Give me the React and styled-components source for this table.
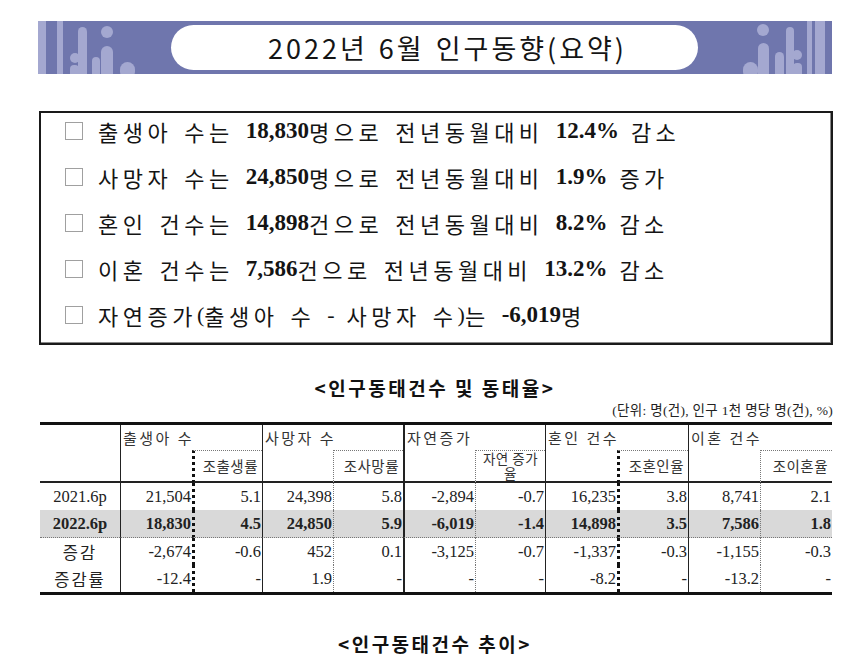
import React from "react";
import styled, { createGlobalStyle } from "styled-components";

const GlobalStyle = createGlobalStyle`
  body {
    margin: 0;
    background: #fff;
    color: #111;
    font-family: "Noto Sans CJK KR", sans-serif;
  }
`;

const Page = styled.div`
  width: 850px;
  box-sizing: border-box;
  padding: 21px 0 30px 38px;
`;

const Banner = styled.div`
  width: 794px;
  height: 53px;
  background: #6f76ad;
  display: flex;
  align-items: center;
`;

const Deco = styled.svg`
  flex: none;
  display: block;
`;

const Pill = styled.div`
  flex: 1;
  height: 45px;
  background: #fff;
  border-radius: 23px;
  display: flex;
  align-items: center;
  justify-content: center;
  padding-left: 26px;
  font-size: 27px;
  letter-spacing: 3px;
  word-spacing: 2px;
  color: #151515;
`;

const Summary = styled.div`
  margin: 37px 0 0 1px;
  width: 794px;
  box-sizing: border-box;
  border: 2px solid #1a1a1a;
  box-shadow: inset -1px -1px 0 #8a8a8a;
  padding: 0 0 0 24px;
`;

const Row = styled.div`
  display: flex;
  align-items: center;
  box-sizing: border-box;
  height: 46px;
  padding-bottom: 10px;
  font-family: "Liberation Serif", "Noto Sans CJK KR", serif;
  font-size: 22px;
  letter-spacing: 4.5px;
  word-spacing: 2px;
  white-space: pre;
  color: #141414;
`;

const Box = styled.span`
  flex: none;
  width: 16px;
  height: 16px;
  border: 1px solid #a0a0a0;
  margin-right: 15px;
`;

const Num = styled.b`
  font-weight: 700;
  letter-spacing: 0;
  word-spacing: 0;
  font-size: 23px;
`;

const Tight = styled.span`
  letter-spacing: 0;
`;

const Caption = styled.div`
  margin-top: ${(p) => p.$top}px;
  width: 794px;
  text-align: center;
  line-height: 24px;
  font-size: 19px;
  font-weight: 700;
  letter-spacing: 2.5px;
`;

const Unit = styled.div`
  margin-top: 3px;
  width: 795px;
  text-align: right;
  line-height: 16px;
  font-family: "Liberation Serif", "Noto Sans CJK KR", serif;
  font-size: 13.5px;
  letter-spacing: 0.3px;
  color: #222;
`;

const Table = styled.table`
  margin: 3px 0 0 2px;
  width: 792px;
  table-layout: fixed;
  border-collapse: separate;
  border-spacing: 0;
  border-top: 3px solid #111;
  border-bottom: 3px solid #111;
`;

const GroupHead = styled.th`
  height: 25px;
  padding: 0 0 0 2px;
  border-left: ${(p) => (p.$bold ? 2 : 1)}px solid #222;
  text-align: left;
  vertical-align: middle;
  font-weight: 400;
  font-size: 15px;
  letter-spacing: 2.5px;
  color: #333;
  white-space: nowrap;
`;

const Corner = styled.th`
  border-bottom: 2px solid #222;
`;

const BlankHead = styled.th`
  border-left: ${(p) => (p.$bold ? 2 : 1)}px solid #222;
  border-bottom: 2px solid #222;
`;

const dotted = (p) => (p.$heavy ? "3px dotted #111" : "1px dotted #777");

const RateHead = styled.th`
  height: 30px;
  padding: ${(p) => (p.$wrap ? "0" : "0 4px 0 0")};
  border-left: ${dotted};
  border-top: 1px dotted #777;
  border-bottom: 2px solid #222;
  text-align: ${(p) => (p.$wrap ? "center" : "right")};
  vertical-align: middle;
  font-weight: 400;
  font-size: ${(p) => (p.$wrap ? 13.5 : 14.5)}px;
  line-height: ${(p) => (p.$wrap ? 15 : 18)}px;
  letter-spacing: 0.5px;
  white-space: pre-line;
  color: #333;
`;

const DataRow = styled.tr`
  background: ${(p) => (p.$hi ? "#d9d9d9" : "transparent")};
  font-weight: ${(p) => (p.$hi ? 700 : 400)};
  td {
    border-bottom: ${(p) => (p.$hi ? "1px dotted #777" : "0")};
  }
`;

const Label = styled.td`
  height: 27px;
  padding: 0;
  text-align: center;
  font-family: "Liberation Serif", "Noto Sans CJK KR", serif;
  font-size: 16.5px;
  color: #222;
  letter-spacing: ${(p) => (p.$ko ? 2 : 0)}px;
`;

const Value = styled.td`
  padding: 0 1px 0 0;
  border-left: ${(p) => (p.$bold ? 2 : 1)}px solid #222;
  text-align: right;
  font-family: "Liberation Serif", serif;
  font-size: 16.5px;
  color: #222;
`;

const Rate = styled.td`
  padding: 0 1px 0 0;
  border-left: ${dotted};
  text-align: right;
  font-family: "Liberation Serif", serif;
  font-size: 16.5px;
  color: #222;
`;

const LeftDeco = () => (
  <Deco width="133" height="53" viewBox="0 0 133 53">
    <rect x="0" y="0" width="8" height="53" fill="#a4a8d0" />
    <rect x="19" y="0" width="6" height="53" fill="#a4a8d0" />
    <rect x="40" y="6" width="9" height="52" rx="4.5" fill="#a4a8d0" />
    <circle cx="37" cy="37" r="5" fill="#a4a8d0" />
    <rect x="32" y="44" width="9" height="14" rx="4" fill="#a4a8d0" />
    <circle cx="69" cy="11" r="6" fill="#a4a8d0" />
    <rect x="63" y="25" width="12" height="33" rx="6" fill="#a4a8d0" />
    <rect x="54" y="36" width="8" height="22" rx="4" fill="#a4a8d0" />
    <rect x="82" y="41" width="15" height="17" rx="7.5" fill="#a4a8d0" />
  </Deco>
);

const RightDeco = () => (
  <Deco width="134" height="53" viewBox="0 0 134 53">
    <rect x="45" y="41" width="15" height="17" rx="7.5" fill="#a4a8d0" />
    <circle cx="65" cy="9" r="6" fill="#a4a8d0" />
    <rect x="60" y="22" width="11" height="36" rx="5.5" fill="#a4a8d0" />
    <rect x="77" y="31" width="9" height="27" rx="4.5" fill="#a4a8d0" />
    <rect x="88" y="6" width="8" height="52" rx="4" fill="#a4a8d0" />
    <circle cx="99" cy="34" r="5" fill="#a4a8d0" />
    <rect x="95" y="42" width="9" height="16" rx="4" fill="#a4a8d0" />
    <rect x="109" y="0" width="5" height="53" fill="#a4a8d0" />
    <rect x="117" y="0" width="10" height="53" fill="#a4a8d0" />
  </Deco>
);

const groups = [
  { name: "출생아 수", rate: "조출생률", heavy: true },
  { name: "사망자 수", rate: "조사망률" },
  { name: "자연증가", rate: "자연 증가\n율", bold: true, wrap: true },
  { name: "혼인 건수", rate: "조혼인율", heavy: true },
  { name: "이혼 건수", rate: "조이혼율" },
];

const rows = [
  { label: "2021.6p", cells: ["21,504", "5.1", "24,398", "5.8", "-2,894", "-0.7", "16,235", "3.8", "8,741", "2.1"] },
  { label: "2022.6p", hi: true, cells: ["18,830", "4.5", "24,850", "5.9", "-6,019", "-1.4", "14,898", "3.5", "7,586", "1.8"] },
  { label: "증감", ko: true, cells: ["-2,674", "-0.6", "452", "0.1", "-3,125", "-0.7", "-1,337", "-0.3", "-1,155", "-0.3"] },
  { label: "증감률", ko: true, cells: ["-12.4", "-", "1.9", "-", "-", "-", "-8.2", "-", "-13.2", "-"] },
];

const widths = [80, 72, 70, 71, 70, 72, 70, 72, 71, 72, 72];

const summary = [
  ["출생아 수는 ", "18,830", "명으로 전년동월대비 ", "12.4%", " 감소"],
  ["사망자 수는 ", "24,850", "명으로 전년동월대비 ", "1.9%", " 증가"],
  ["혼인 건수는 ", "14,898", "건으로 전년동월대비 ", "8.2%", " 감소"],
  ["이혼 건수는 ", "7,586", "건으로 전년동월대비 ", "13.2%", " 감소"],
];

export default function App() {
  return (
    <Page>
      <GlobalStyle />
      <Banner>
        <LeftDeco />
        <Pill>2022년 6월 인구동향(요약)</Pill>
        <RightDeco />
      </Banner>

      <Summary>
        {summary.map((s) => (
          <Row key={s[0]}>
            <Box />
            {s[0]}
            <Num>{s[1]}</Num>
            {s[2]}
            <Num>{s[3]}</Num>
            {s[4]}
          </Row>
        ))}
        <Row>
          <Box />
          자연증가<Tight>(</Tight>출생아 수 <Tight>-</Tight> 사망자 수<Tight>)</Tight>
          {"는 "}
          <Num>-6,019</Num>명
        </Row>
      </Summary>

      <Caption $top={31}>&lt;인구동태건수 및 동태율&gt;</Caption>
      <Unit>(단위: 명(건), 인구 1천 명당 명(건), %)</Unit>

      <Table>
        <colgroup>
          {widths.map((w, i) => (
            <col key={i} style={{ width: w }} />
          ))}
        </colgroup>
        <thead>
          <tr>
            <Corner rowSpan={2} />
            {groups.map((g) => (
              <GroupHead key={g.name} colSpan={2} $bold={g.bold}>
                {g.name}
              </GroupHead>
            ))}
          </tr>
          <tr>
            {groups.map((g) => (
              <React.Fragment key={g.name}>
                <BlankHead $bold={g.bold} />
                <RateHead $heavy={g.heavy} $wrap={g.wrap}>
                  {g.rate}
                </RateHead>
              </React.Fragment>
            ))}
          </tr>
        </thead>
        <tbody>
          {rows.map((r) => (
            <DataRow key={r.label} $hi={r.hi}>
              <Label $ko={r.ko}>{r.label}</Label>
              {groups.map((g, i) => (
                <React.Fragment key={g.name}>
                  <Value $bold={g.bold}>{r.cells[i * 2]}</Value>
                  <Rate $heavy={g.heavy}>{r.cells[i * 2 + 1]}</Rate>
                </React.Fragment>
              ))}
            </DataRow>
          ))}
        </tbody>
      </Table>

      <Caption $top={37}>&lt;인구동태건수 추이&gt;</Caption>
    </Page>
  );
}
